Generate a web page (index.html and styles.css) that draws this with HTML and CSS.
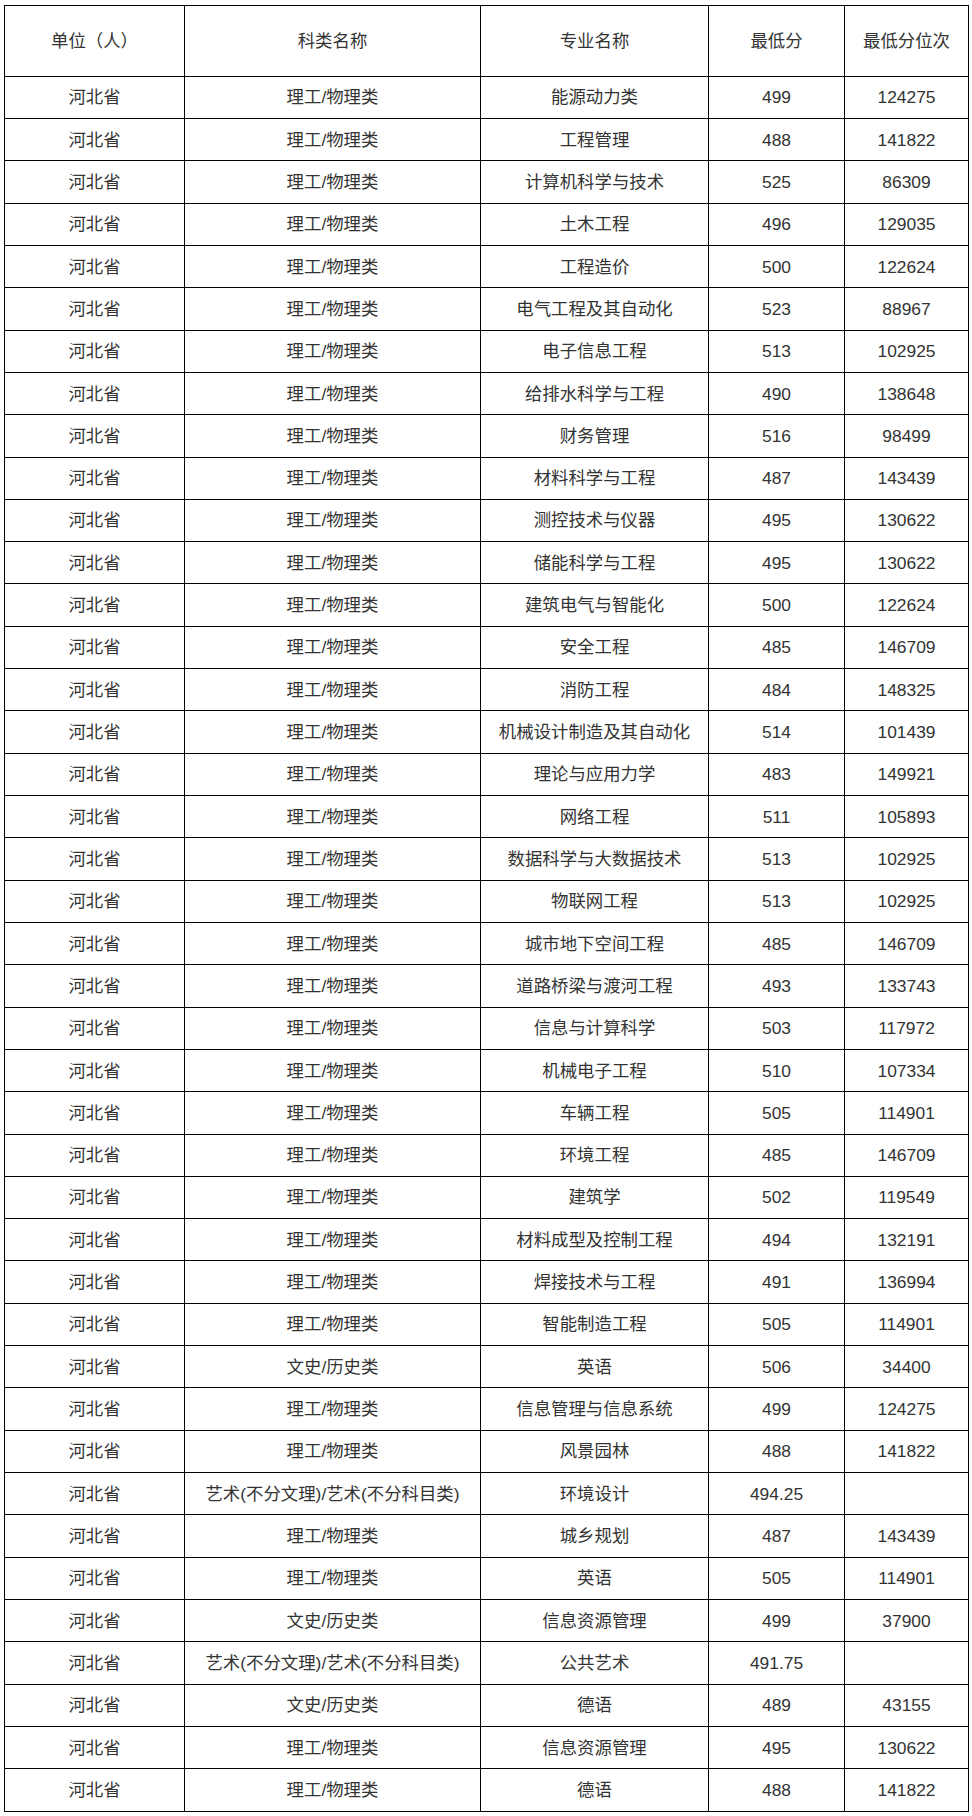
FILE: index.html
```html
<!DOCTYPE html>
<html lang="zh-CN">
<head>
<meta charset="utf-8">
<title>河北省录取分数</title>
<link rel="stylesheet" href="styles.css">
</head>
<body>
<table class="scores">
  <colgroup>
    <col class="c-unit">
    <col class="c-kind">
    <col class="c-major">
    <col class="c-min">
    <col class="c-rank">
  </colgroup>
  <thead>
    <tr><th>单位（人）</th><th>科类名称</th><th>专业名称</th><th>最低分</th><th>最低分位次</th></tr>
  </thead>
  <tbody>
    <tr><td>河北省</td><td>理工/物理类</td><td>能源动力类</td><td>499</td><td>124275</td></tr>
    <tr><td>河北省</td><td>理工/物理类</td><td>工程管理</td><td>488</td><td>141822</td></tr>
    <tr><td>河北省</td><td>理工/物理类</td><td>计算机科学与技术</td><td>525</td><td>86309</td></tr>
    <tr><td>河北省</td><td>理工/物理类</td><td>土木工程</td><td>496</td><td>129035</td></tr>
    <tr><td>河北省</td><td>理工/物理类</td><td>工程造价</td><td>500</td><td>122624</td></tr>
    <tr><td>河北省</td><td>理工/物理类</td><td>电气工程及其自动化</td><td>523</td><td>88967</td></tr>
    <tr><td>河北省</td><td>理工/物理类</td><td>电子信息工程</td><td>513</td><td>102925</td></tr>
    <tr><td>河北省</td><td>理工/物理类</td><td>给排水科学与工程</td><td>490</td><td>138648</td></tr>
    <tr><td>河北省</td><td>理工/物理类</td><td>财务管理</td><td>516</td><td>98499</td></tr>
    <tr><td>河北省</td><td>理工/物理类</td><td>材料科学与工程</td><td>487</td><td>143439</td></tr>
    <tr><td>河北省</td><td>理工/物理类</td><td>测控技术与仪器</td><td>495</td><td>130622</td></tr>
    <tr><td>河北省</td><td>理工/物理类</td><td>储能科学与工程</td><td>495</td><td>130622</td></tr>
    <tr><td>河北省</td><td>理工/物理类</td><td>建筑电气与智能化</td><td>500</td><td>122624</td></tr>
    <tr><td>河北省</td><td>理工/物理类</td><td>安全工程</td><td>485</td><td>146709</td></tr>
    <tr><td>河北省</td><td>理工/物理类</td><td>消防工程</td><td>484</td><td>148325</td></tr>
    <tr><td>河北省</td><td>理工/物理类</td><td>机械设计制造及其自动化</td><td>514</td><td>101439</td></tr>
    <tr><td>河北省</td><td>理工/物理类</td><td>理论与应用力学</td><td>483</td><td>149921</td></tr>
    <tr><td>河北省</td><td>理工/物理类</td><td>网络工程</td><td>511</td><td>105893</td></tr>
    <tr><td>河北省</td><td>理工/物理类</td><td>数据科学与大数据技术</td><td>513</td><td>102925</td></tr>
    <tr><td>河北省</td><td>理工/物理类</td><td>物联网工程</td><td>513</td><td>102925</td></tr>
    <tr><td>河北省</td><td>理工/物理类</td><td>城市地下空间工程</td><td>485</td><td>146709</td></tr>
    <tr><td>河北省</td><td>理工/物理类</td><td>道路桥梁与渡河工程</td><td>493</td><td>133743</td></tr>
    <tr><td>河北省</td><td>理工/物理类</td><td>信息与计算科学</td><td>503</td><td>117972</td></tr>
    <tr><td>河北省</td><td>理工/物理类</td><td>机械电子工程</td><td>510</td><td>107334</td></tr>
    <tr><td>河北省</td><td>理工/物理类</td><td>车辆工程</td><td>505</td><td>114901</td></tr>
    <tr><td>河北省</td><td>理工/物理类</td><td>环境工程</td><td>485</td><td>146709</td></tr>
    <tr><td>河北省</td><td>理工/物理类</td><td>建筑学</td><td>502</td><td>119549</td></tr>
    <tr><td>河北省</td><td>理工/物理类</td><td>材料成型及控制工程</td><td>494</td><td>132191</td></tr>
    <tr><td>河北省</td><td>理工/物理类</td><td>焊接技术与工程</td><td>491</td><td>136994</td></tr>
    <tr><td>河北省</td><td>理工/物理类</td><td>智能制造工程</td><td>505</td><td>114901</td></tr>
    <tr><td>河北省</td><td>文史/历史类</td><td>英语</td><td>506</td><td>34400</td></tr>
    <tr><td>河北省</td><td>理工/物理类</td><td>信息管理与信息系统</td><td>499</td><td>124275</td></tr>
    <tr><td>河北省</td><td>理工/物理类</td><td>风景园林</td><td>488</td><td>141822</td></tr>
    <tr><td>河北省</td><td>艺术(不分文理)/艺术(不分科目类)</td><td>环境设计</td><td>494.25</td><td></td></tr>
    <tr><td>河北省</td><td>理工/物理类</td><td>城乡规划</td><td>487</td><td>143439</td></tr>
    <tr><td>河北省</td><td>理工/物理类</td><td>英语</td><td>505</td><td>114901</td></tr>
    <tr><td>河北省</td><td>文史/历史类</td><td>信息资源管理</td><td>499</td><td>37900</td></tr>
    <tr><td>河北省</td><td>艺术(不分文理)/艺术(不分科目类)</td><td>公共艺术</td><td>491.75</td><td></td></tr>
    <tr><td>河北省</td><td>文史/历史类</td><td>德语</td><td>489</td><td>43155</td></tr>
    <tr><td>河北省</td><td>理工/物理类</td><td>信息资源管理</td><td>495</td><td>130622</td></tr>
    <tr><td>河北省</td><td>理工/物理类</td><td>德语</td><td>488</td><td>141822</td></tr>
  </tbody>
</table>
</body>
</html>
```

FILE: styles.css
```css
html, body {
  margin: 0;
  padding: 0;
  background: #ffffff;
}

body {
  padding: 5px 0 0 4px;
  font-family: "Liberation Sans", "Noto Sans CJK SC", sans-serif;
  font-size: 17.4px;
  color: #333333;
}

.scores {
  width: 964px;
  table-layout: fixed;
  border-collapse: collapse;
  border: 1px solid #000000;
}

.c-unit { width: 180px; }
.c-kind { width: 296px; }
.c-major { width: 228px; }
.c-min { width: 136px; }
.c-rank { width: 124px; }

.scores th,
.scores td {
  border: 1px solid #000000;
  padding: 0;
  text-align: center;
  vertical-align: middle;
  font-weight: normal;
  white-space: nowrap;
  line-height: 20px;
}

.scores thead th {
  height: 69.7px;
}

.scores tbody td {
  height: 41.32px;
}
```
